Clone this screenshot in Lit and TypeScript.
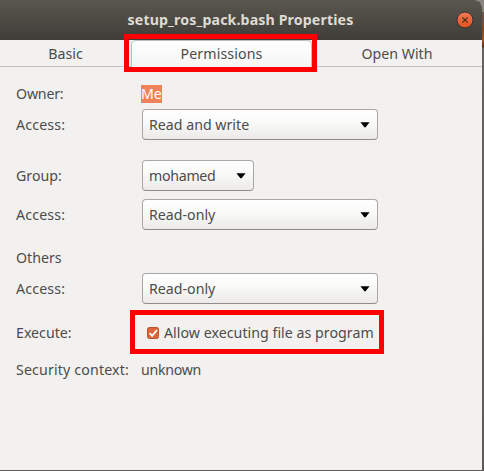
import { LitElement, html, css } from "lit";
import { customElement, property } from "lit/decorators.js";

@customElement("combo-box")
class ComboBox extends LitElement {
  @property() label = "";
  static styles = css`
    :host {
      display: flex; align-items: center; justify-content: space-between;
      box-sizing: border-box; width: 236px; height: 31px; padding: 0 7px 0 6px;
      border: 1px solid #aaa8a6; border-bottom-color: #8e8c8a; border-radius: 4px;
      background: linear-gradient(#fff, #f9f9f8 45%, #ebeae8);
    }
    .label { white-space: nowrap; line-height: 18px; }
    svg { flex: none; }
  `;
  render() {
    return html`<span class="label">${this.label}</span>
      <svg width="10" height="6" viewBox="0 0 10 6"><path d="M0.4 0.3H9.6L5.8 5Q5 5.8 4.2 5Z" fill="#000" /></svg>`;
  }
}

@customElement("app-root")
class AppRoot extends LitElement {
  static styles = css`
    :host {
      display: block; position: relative; box-sizing: border-box; width: 484px; height: 471px; overflow: hidden;
      font: 14.2px/18px "Noto Sans", sans-serif; color: #4c4c4c;
      background: linear-gradient(#8a8380 0 12px, #6f5047 12px 20px, #8b451c 28px, #a25319 40px, #5a2612 47px, #646361 48px 84px, #5b5a58);
    }
    .window { width: 482px; height: 470px; background: #f2f1f0; border-radius: 0 7px 0 0; display: flex; flex-direction: column; overflow: hidden; }
    .title { flex: none; height: 40px; box-sizing: border-box; padding-bottom: 1px; display: grid; grid-template-columns: 1fr auto 1fr; align-items: center; background: linear-gradient(#5a574e, #3e3d38); color: #dfdbd2; font-weight: 700; }
    .title .name { grid-column: 2; letter-spacing: 0.12px; margin-right: 1px; }
    .close { justify-self: end; margin-right: 8px; width: 18px; height: 18px; }
    .tabs { flex: none; height: 27px; box-sizing: border-box; display: grid; grid-template-columns: 131px 181px 1fr; border-bottom: 1px solid #c4c2c0; text-align: center; line-height: 28px; }
    .active { background: linear-gradient(#fff, #f5f4f3); border: 1px solid #c0bebc; border-bottom: 0; border-radius: 5px 5px 0 0; line-height: 26px; letter-spacing: 0.1px; }
    .form { padding: 18px 16px; display: flex; flex-direction: column; }
    .row { display: grid; grid-template-columns: 125px 1fr; align-items: center; white-space: nowrap; height: 18px; }
    .combo { height: 31px; }
    .combo combo-box { margin-left: 1px; }
    .combo .small { width: 112px; letter-spacing: -0.3px; }
    .g6 { margin-top: 6px; }
    .g8 { margin-top: 8px; }
    .g19 { margin-top: 19px; }
    .g20 { margin-top: 20px; }
    .tight { letter-spacing: -0.2px; }
    .tighter { letter-spacing: -0.3px; }
    .loose { letter-spacing: 0.15px; }
    .sel { background: #f0825a; color: #fff; justify-self: start; }
    .check { display: flex; align-items: center; padding-left: 6px; gap: 5px; letter-spacing: 0.03px; }
    .mark { position: absolute; box-sizing: border-box; border: 5px solid #f00; }
    .m1 { left: 124px; top: 34px; width: 193px; height: 38px; }
    .m2 { left: 130px; top: 310px; width: 254px; height: 44px; }
  `;
  render() {
    return html`
      <div class="window">
        <div class="title"><span class="name">setup_ros_pack.bash Properties</span>
          <svg class="close" viewBox="0 0 18 18">
            <defs><linearGradient id="c" x2="0" y2="1"><stop stop-color="#f47a55" /><stop offset="1" stop-color="#e2501f" /></linearGradient></defs>
            <circle cx="9" cy="9" r="8" fill="url(#c)" stroke="#34332f" /><path d="M6.3 6.3l5.4 5.4m0-5.4l-5.4 5.4" stroke="#4b2b18" stroke-width="1.2" />
          </svg>
        </div>
        <div class="tabs"><span>Basic</span><span class="active">Permissions</span><span>Open With</span></div>
        <div class="form">
          <div class="row"><span class="tight">Owner:</span><span class="sel">Me</span></div>
          <div class="row combo g6"><span class="loose">Access:</span><combo-box label="Read and write"></combo-box></div>
          <div class="row combo g20"><span>Group:</span><combo-box class="small" label="mohamed"></combo-box></div>
          <div class="row combo g8"><span class="loose">Access:</span><combo-box label="Read-only"></combo-box></div>
          <div class="row g19"><span>Others</span></div>
          <div class="row combo g6"><span class="loose">Access:</span><combo-box label="Read-only"></combo-box></div>
          <div class="row g20"><span>Execute:</span><span class="check">
            <svg width="12" height="12" viewBox="0 0 12 12"><rect x="0.5" y="0.5" width="11" height="11" rx="1.8" fill="#dc6837" stroke="#b9532b" /><path d="M2.6 6l2.5 2.8L10 3" fill="none" stroke="#fff" stroke-width="1.8" /></svg>
            <span>Allow executing file as program</span></span></div>
          <div class="row g19"><span class="loose">Security context:</span><span class="tighter">unknown</span></div>
        </div>
      </div>
      <div class="mark m1"></div>
      <div class="mark m2"></div>`;
  }
}
